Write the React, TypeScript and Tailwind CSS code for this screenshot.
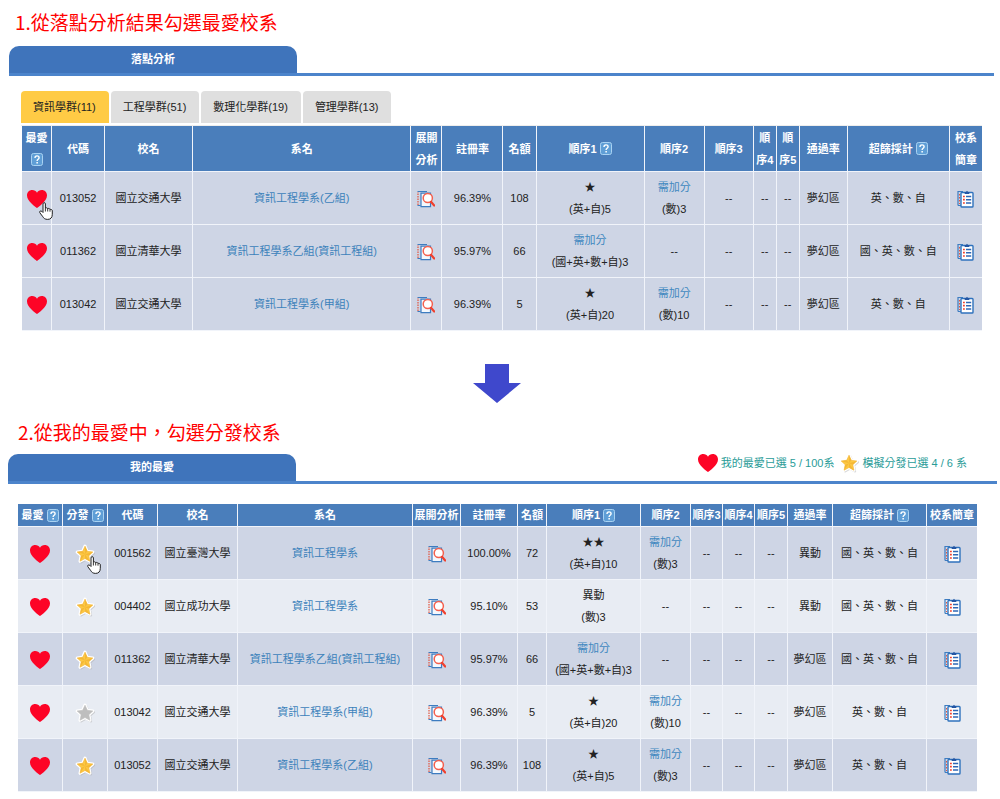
import React, { useState } from "react";
import type { ReactNode } from "react";

type Order = { head: ReactNode; text: string } | null;

interface Dept {
  code: string;
  school: string;
  name: string;
  rate: string;
  quota: string;
  first: Order;
  second: Order;
  pass: string;
  subjects: string;
  starred?: boolean;
}

function Heart() {
  return (
    <svg viewBox="0 0 20 18" className="block h-[18px] w-5">
      <path
        d="M10 18C8.800 16.900 0 11.300 0 5.400 0 2.100 2.300 0 5.200 0 7.300 0 9.100 1 10 2.700 10.900 1 12.700 0 14.800 0 17.700 0 20 2.100 20 5.400 20 11.300 11.200 16.900 10 18Z"
        fill="#fd0426"
      />
    </svg>
  );
}

const STAR_PATH = "M10 2.200 12.300 7.300 17.800 8 13.800 11.700 14.900 17.200 10 14.500 5.100 17.200 6.200 11.700 2.200 8 7.700 7.300Z";

function Star({ active = true }: { active?: boolean }) {
  return (
    <svg viewBox="0 0 20 20" className="block size-5 overflow-visible">
      <path d={STAR_PATH} transform="translate(1 1)" fill="#a8a8a8" stroke="#a8a8a8" opacity="0.45" strokeWidth="2.500" strokeLinejoin="round" />
      <path d={STAR_PATH} fill="#fff" stroke="#fff" strokeWidth="3.200" strokeLinejoin="round" />
      <path d={STAR_PATH} fill={active ? "#fdc842" : "#bebebe"} stroke={active ? "#f3b637" : "#bebebe"} strokeWidth="0.600" strokeLinejoin="round" />
      {active && (
        <path d="M10 10.300V2.200L12.300 7.300ZM10 10.300 17.800 8 13.800 11.700ZM10 10.300 14.900 17.200 10 14.500ZM10 10.300 5.100 17.200 6.200 11.700ZM10 10.300 2.200 8 7.700 7.300Z" fill="#efae2e" opacity="0.6" />
      )}
    </svg>
  );
}

function Help({ label }: { label: string }) {
  return (
    <button type="button" aria-label={label} className="mb-0.5 inline-block align-middle">
      <svg viewBox="0 0 12 13" className="block h-[13px] w-3">
        <rect x="0.500" y="0.500" width="11" height="12" rx="2" fill="#5f9ed6" stroke="#a9d2f2" />
        <path d="M4 4.900C4 3.500 4.800 2.900 6 2.900S8.100 3.600 8.100 4.700C8.100 6.200 6.100 6.200 6.100 7.900" fill="none" stroke="#fff" strokeWidth="1.400" />
        <rect x="5.400" y="9" width="1.500" height="1.500" fill="#fff" />
      </svg>
    </button>
  );
}

function AnalyseIcon() {
  return (
    <svg viewBox="0 0 18 18" className="block size-[18px]" fill="none">
      <path d="M1 15V2" stroke="#e2553f" strokeWidth="1.200" strokeDasharray="1.500 1" />
      <path d="M.5 1.500H10M.5 15.500H3.500" stroke="#3d7cc0" strokeWidth="1.200" />
      <path d="M4 16.700V3.200H13.500V16.700Z" fill="#f4f8fd" stroke="#3d7cc0" strokeWidth="1.200" />
      <circle cx="10.800" cy="8" r="4.600" fill="#fff" stroke="#f4604e" strokeWidth="1.500" />
      <path d="M14 11.800 17.200 15.500" stroke="#f0402e" strokeWidth="2.200" strokeLinecap="round" />
    </svg>
  );
}

function GuideIcon() {
  return (
    <svg viewBox="0 0 17 18" className="block h-[18px] w-[17px]" fill="none">
      <path d="M1 15.500V1.500H6M1 15.500H4" stroke="#3d7cc0" strokeWidth="1.200" />
      <path d="M2.500 4V14" stroke="#e2553f" strokeWidth="1" strokeDasharray="1.500 1.500" />
      <rect x="4" y="2.500" width="12" height="14.500" rx="0.800" fill="#fff" stroke="#2f72bd" strokeWidth="1.400" />
      <path d="M7.700 4V1.900H9L10 .8 11 1.900H12.300V4Z" fill="#2456a4" />
      <path d="M6 6.500H7.800M6 9.700H7.800M6 13H7.800" stroke="#f0402e" strokeWidth="1.700" />
      <path d="M9 6.500H14.200M9 9.700H14.200M9 13H14.200" stroke="#2f68b5" strokeWidth="1.600" />
    </svg>
  );
}

function HandCursor() {
  return (
    <svg viewBox="0 0 14 18" className="pointer-events-none block h-[18px] w-3.5">
      <path
        d="M4 10.500V1.900C4 .2 6.400.2 6.400 1.900V6.300C6.900 5.500 8.500 5.700 8.700 6.800 9.300 6.100 10.800 6.400 11 7.500 11.900 7 13.300 7.500 13.300 8.900V12.300C13.300 15.500 11.700 17.400 8.600 17.400 5.900 17.400 4.700 16.300 3.500 14.300L.8 10.700C0 9.300 1.800 8.300 2.900 9.400Z"
        fill="#fff"
        stroke="#222"
        strokeWidth="1"
        strokeLinejoin="round"
      />
      <path d="M6.400 6.300V9.500M8.700 6.800V9.500M11 7.500V9.700" stroke="#222" strokeWidth="0.900" />
    </svg>
  );
}

function Pointed({ children, show }: { children: ReactNode; show: boolean }) {
  return (
    <span className="relative inline-block align-middle">
      {children}
      {show && (
        <span className="absolute top-3 left-3">
          <HandCursor />
        </span>
      )}
    </span>
  );
}

const CELL = "border-r border-b border-[#f1f4fa] p-0 text-center last:border-r-0";

function Th({ children }: { children: ReactNode }) {
  return <th scope="col" className={`${CELL} bg-[#4a7ebb] font-bold whitespace-nowrap text-white`}>{children}</th>;
}

function Td({ children }: { children: ReactNode }) {
  return <td className={`${CELL} h-[53px]`}>{children}</td>;
}

function OrderCell({ value }: { value: Order }) {
  return <Td>{value ? <>{value.head}<br />{value.text}</> : "--"}</Td>;
}

function Bonus() {
  return <a href="#bonus" className="text-[#4088c0]">需加分</a>;
}

function DeptCells({ d }: { d: Dept }) {
  return (
    <>
      <Td>{d.code}</Td>
      <Td>{d.school}</Td>
      <Td><a href="#dept" className="text-[#3c82bb]">{d.name}</a></Td>
      <Td>
        <button type="button" aria-label="展開分析" className="inline-block align-middle"><AnalyseIcon /></button>
      </Td>
      <Td>{d.rate}</Td>
      <Td>{d.quota}</Td>
      <OrderCell value={d.first} />
      <OrderCell value={d.second} />
      <Td>--</Td>
      <Td>--</Td>
      <Td>--</Td>
      <Td>{d.pass}</Td>
      <Td>{d.subjects}</Td>
      <Td>
        <a href="#guide" aria-label="校系簡章" className="inline-block align-middle"><GuideIcon /></a>
      </Td>
    </>
  );
}

function HeartButton() {
  return <button type="button" aria-label="最愛" aria-pressed="true" className="block"><Heart /></button>;
}

const results: Dept[] = [
  { code: "013052", school: "國立交通大學", name: "資訊工程學系(乙組)", rate: "96.39%", quota: "108", first: { head: "★", text: "(英+自)5" }, second: { head: <Bonus />, text: "(數)3" }, pass: "夢幻區", subjects: "英、數、自" },
  { code: "011362", school: "國立清華大學", name: "資訊工程學系乙組(資訊工程組)", rate: "95.97%", quota: "66", first: { head: <Bonus />, text: "(國+英+數+自)3" }, second: null, pass: "夢幻區", subjects: "國、英、數、自" },
  { code: "013042", school: "國立交通大學", name: "資訊工程學系(甲組)", rate: "96.39%", quota: "5", first: { head: "★", text: "(英+自)20" }, second: { head: <Bonus />, text: "(數)10" }, pass: "夢幻區", subjects: "英、數、自" },
];

const favourites: Dept[] = [
  { code: "001562", school: "國立臺灣大學", name: "資訊工程學系", rate: "100.00%", quota: "72", first: { head: "★★", text: "(英+自)10" }, second: { head: <Bonus />, text: "(數)3" }, pass: "異動", subjects: "國、英、數、自", starred: true },
  { code: "004402", school: "國立成功大學", name: "資訊工程學系", rate: "95.10%", quota: "53", first: { head: "異動", text: "(數)3" }, second: null, pass: "異動", subjects: "國、英、數、自", starred: true },
  { ...results[1], starred: true },
  { ...results[2], starred: false },
  { ...results[0], starred: true },
];

const groups = ["資訊學群(11)", "工程學群(51)", "數理化學群(19)", "管理學群(13)"];

function Banner({ title, children }: { title: string; children?: ReactNode }) {
  return (
    <div className="flex items-end justify-between border-b-3 border-[#4c84cb]">
      <h2 className="w-72 rounded-t-[10px] bg-[#3f74bb] text-center text-[11px] leading-[27px] font-bold text-white">{title}</h2>
      {children}
    </div>
  );
}

function ResultsTable() {
  return (
    <table className="w-full table-fixed border-separate border-spacing-0 leading-[22px]">
      <colgroup>
        <col className="w-[30px]" />
        <col className="w-[53px]" />
        <col className="w-[88px]" />
        <col className="w-[218px]" />
        <col className="w-[31px]" />
        <col className="w-[61px]" />
        <col className="w-[33px]" />
        <col className="w-[108px]" />
        <col className="w-[60px]" />
        <col className="w-[49px]" />
        <col className="w-[23px]" />
        <col className="w-[23px]" />
        <col className="w-[48px]" />
        <col className="w-[102px]" />
        <col className="w-[32px]" />
      </colgroup>
      <thead>
        <tr className="h-[46px]">
          <Th>最愛<br /><Help label="最愛說明" /></Th>
          <Th>代碼</Th>
          <Th>校名</Th>
          <Th>系名</Th>
          <Th>展開<br />分析</Th>
          <Th>註冊率</Th>
          <Th>名額</Th>
          <Th>順序1 <Help label="順序說明" /></Th>
          <Th>順序2</Th>
          <Th>順序3</Th>
          <Th>順<br />序4</Th>
          <Th>順<br />序5</Th>
          <Th>通過率</Th>
          <Th>超篩採計 <Help label="超篩採計說明" /></Th>
          <Th>校系<br />簡章</Th>
        </tr>
      </thead>
      <tbody>
        {results.map((d, i) => (
          <tr key={d.code} className="bg-[#ced5e5]">
            <Td><Pointed show={i === 0}><HeartButton /></Pointed></Td>
            <DeptCells d={d} />
          </tr>
        ))}
      </tbody>
    </table>
  );
}

function FavouritesTable({ starred, onToggle }: { starred: boolean[]; onToggle: (i: number) => void }) {
  return (
    <table className="w-full table-fixed border-separate border-spacing-0 leading-[22px]">
      <colgroup>
        <col className="w-[45px]" />
        <col className="w-[45px]" />
        <col className="w-[50px]" />
        <col className="w-[80px]" />
        <col className="w-[175px]" />
        <col className="w-[48px]" />
        <col className="w-[57px]" />
        <col className="w-[29px]" />
        <col className="w-[94px]" />
        <col className="w-[50px]" />
        <col className="w-[32px]" />
        <col className="w-[32px]" />
        <col className="w-[33px]" />
        <col className="w-[45px]" />
        <col className="w-[94px]" />
        <col className="w-[50px]" />
      </colgroup>
      <thead>
        <tr>
          <Th>最愛 <Help label="最愛說明" /></Th>
          <Th>分發 <Help label="分發說明" /></Th>
          <Th>代碼</Th>
          <Th>校名</Th>
          <Th>系名</Th>
          <Th>展開分析</Th>
          <Th>註冊率</Th>
          <Th>名額</Th>
          <Th>順序1 <Help label="順序說明" /></Th>
          <Th>順序2</Th>
          <Th>順序3</Th>
          <Th>順序4</Th>
          <Th>順序5</Th>
          <Th>通過率</Th>
          <Th>超篩採計 <Help label="超篩採計說明" /></Th>
          <Th>校系簡章</Th>
        </tr>
      </thead>
      <tbody>
        {favourites.map((d, i) => (
          <tr key={d.code} className="bg-[#ced5e5] even:bg-[#e8ecf3]">
            <Td><Pointed show={false}><HeartButton /></Pointed></Td>
            <Td>
              <Pointed show={i === 0}>
                <button type="button" aria-label="分發" aria-pressed={starred[i]} onClick={() => onToggle(i)} className="block">
                  <Star active={starred[i]} />
                </button>
              </Pointed>
            </Td>
            <DeptCells d={d} />
          </tr>
        ))}
      </tbody>
    </table>
  );
}

export default function App() {
  const [group, setGroup] = useState(0);
  const [starred, setStarred] = useState(favourites.map((d) => Boolean(d.starred)));
  const chosen = starred.filter(Boolean).length;

  return (
    <main className="bg-white font-['Liberation_Sans','Noto_Sans_CJK_TC',sans-serif] text-[11px] text-[#222]">
      <section className="pt-2 pr-1.5 pl-[9px]">
        <h1 className="pl-1.5 font-['Noto_Sans_CJK_TC',sans-serif] text-[19px] leading-7 text-[#ff0000]">1.從落點分析結果勾選最愛校系</h1>
        <div className="pt-2.5">
          <Banner title="落點分析" />
        </div>
        <div className="px-3 pt-[15px]">
          <div className="flex gap-0.5" role="tablist">
            {groups.map((g, i) => (
              <button
                key={g}
                type="button"
                role="tab"
                aria-selected={i === group}
                onClick={() => setGroup(i)}
                className={`h-8 rounded-t-sm pr-[13px] pl-3 ${i === group ? "bg-[#ffcb45]" : "bg-[#dfdfdf]"}`}
              >
                {g}
              </button>
            ))}
          </div>
          <div className="mt-0.5 border-t border-[#efeeec] pl-px">
            <ResultsTable />
          </div>
        </div>
      </section>

      <div className="flex justify-center pt-[33px] pr-1.5">
        <svg viewBox="0 0 48 39" className="block h-[39px] w-12">
          <path d="M12 0H36V19H48L24 39 0 19H12Z" fill="#3f48cc" />
        </svg>
      </div>

      <section className="pt-[15px] pr-[3px] pl-2">
        <h1 className="pl-2.5 font-['Noto_Sans_CJK_TC',sans-serif] text-[19px] leading-7 text-[#ff0000]">2.從我的最愛中，勾選分發校系</h1>
        <div className="pt-[7px]">
          <Banner title="我的最愛">
            <p className="flex items-center gap-[3px] pr-[30px] pb-2 text-[#2a9c98]">
              <Heart />
              <span className="pr-0.5">我的最愛已選 5 / 100系</span>
              <Star />
              <span>模擬分發已選 {chosen} / 6 系</span>
            </p>
          </Banner>
        </div>
        <div className="pt-5 pr-5 pl-2.5">
          <FavouritesTable
            starred={starred}
            onToggle={(i) => setStarred(starred.map((s, n) => (n === i ? !s : s)))}
          />
        </div>
      </section>
    </main>
  );
}
